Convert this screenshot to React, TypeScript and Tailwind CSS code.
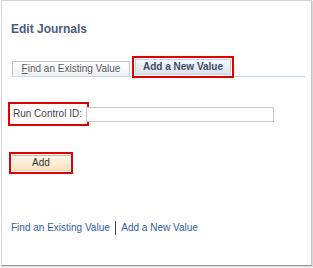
export default function App() {
  return (
    <div className="w-[313px] h-[268px] bg-white" style={{ fontFamily: '"Liberation Sans", Arial, sans-serif' }}>
      <div className="ml-[1px] w-[311px] h-[266px] border border-[#d4d4d4] border-b-[#9a9a9a] border-r-[#c4c4c4] shadow-[1px_1px_1px_rgba(0,0,0,0.15)] pl-[9px] pt-[21px]">
        <div className="text-[12px] leading-[14px] font-bold text-[#4d5c7b]">Edit Journals</div>

        {/* tabs */}
        <div className="mt-[20px] w-[294px] flex items-end border-b border-[#c9d6e4]">
          <div className="ml-[1px] w-[118px] h-[15px] border border-[#c2c2c2] border-b-0 bg-gradient-to-b from-white to-[#eef1f5] flex items-center justify-center text-[10px] leading-[12px] text-[#5a5a5a]">
            <span>
              <span className="underline">F</span>ind an Existing Value
            </span>
          </div>
          <div className="ml-[2px] w-[102px] h-[22px] border-2 border-[#e00000] -mb-[2px] relative p-[1px] bg-white">
            <div className="h-full bg-gradient-to-b from-[#f6f8fb] to-[#d9e2ec] border border-[#cbd5e0] flex items-center justify-center text-[10px] leading-[12px] font-bold text-[#3f4c68]">
              Add a New Value
            </div>
          </div>
        </div>

        {/* run control */}
        <div className="mt-[25px] -ml-[3px] flex items-center">
          <div className="w-[81px] h-[24px] border-2 border-[#e00000] flex items-center pl-[3px] text-[10px] leading-[12px] text-[#444]">
            Run Control ID:
          </div>
          <input
            type="text"
            className="-ml-[3px] w-[188px] h-[15px] border border-[#c8c8c8] bg-white outline-none relative"
          />
        </div>

        {/* add button */}
        <div className="mt-[26px] -ml-[2px] w-[64px] h-[22px] border-2 border-[#e00000]">
          <button className="ml-[1px] mt-[1px] w-[58px] h-[16px] bg-gradient-to-b from-[#fef5e8] to-[#fbe2c0] border-t border-[#dbb48c] border-b border-b-[#eed3b2] text-[10px] leading-[12px] text-[#333] flex items-center justify-center">
            Add
          </button>
        </div>

        {/* links */}
        <div className="mt-[47px] flex items-center text-[10px] leading-[12px] text-[#2f5ea6]">
          <span>Find an Existing Value</span>
          <span className="inline-block w-[1.5px] h-[14px] bg-[#3a4560] mx-[5px]" />
          <span>Add a New Value</span>
        </div>
      </div>
    </div>
  )
}
